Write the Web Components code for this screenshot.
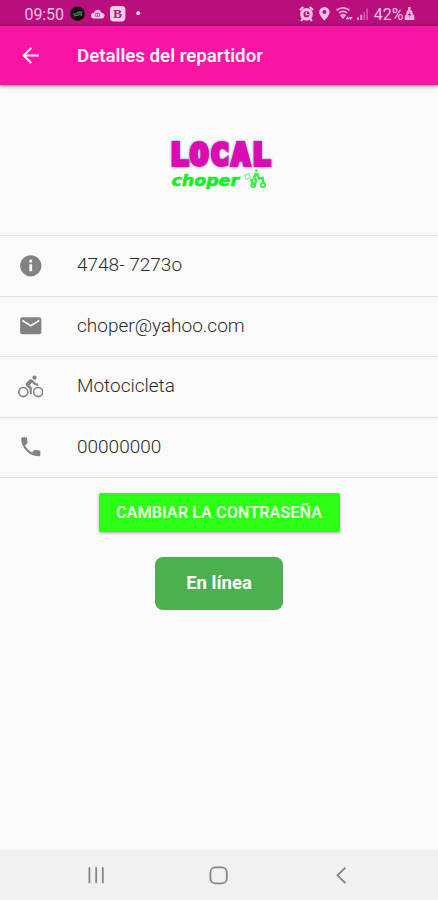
<!DOCTYPE html>
<html lang="es">
<head>
<meta charset="utf-8">
<meta name="viewport" content="width=device-width, initial-scale=1">
<title>Detalles del repartidor</title>
<style>
    body {
        margin: 0;
        background: #fafafa;
        font-family: Roboto, "Liberation Sans", sans-serif;
    }
</style>
</head>
<body>
<driver-screen></driver-screen>

<script>
// Paths for the list and toolbar icons, all on a 24 unit grid
const ICONS = {
    back: '<path d="M20 11H7.83l5.59-5.59L12 4l-8 8 8 8 1.41-1.41L7.83 13H20z"/>',
    info: '<path d="M12 2a10 10 0 1 0 0 20 10 10 0 0 0 0-20zm1.3 15.2h-2.6v-6.7h2.6zm0-8.3h-2.6V6.4h2.6z"/>',
    mail: '<path d="M20 4H4a2 2 0 0 0-2 2v12a2 2 0 0 0 2 2h16a2 2 0 0 0 2-2V6a2 2 0 0 0-2-2zm0 4-8 5-8-5V6l8 5 8-5z"/>',
    bike: '<path d="M15.5 5.5a2 2 0 1 0 0-4 2 2 0 0 0 0 4zM5 12a5 5 0 1 0 0 10 5 5 0 0 0 0-10zm0 8.5a3.5 3.5 0 1 1 0-7 3.5 3.5 0 0 1 0 7zm5.8-10 2.4-2.4.8.8c1.3 1.3 3 2.1 5.1 2.1V9c-1.5 0-2.7-.6-3.6-1.5l-1.9-1.9c-.5-.4-1-.6-1.6-.6s-1.1.2-1.4.6L7.8 8.4c-.4.4-.6.9-.6 1.4 0 .6.2 1.1.6 1.4L11 14v5h2v-6.2zM19 12a5 5 0 1 0 0 10 5 5 0 0 0 0-10zm0 8.5a3.5 3.5 0 1 1 0-7 3.5 3.5 0 0 1 0 7z"/>',
    phone: '<path d="M6.62 10.79c1.44 2.83 3.76 5.14 6.59 6.59l2.2-2.2c.27-.27.67-.36 1.02-.24 1.12.37 2.33.57 3.57.57.55 0 1 .45 1 1V20c0 .55-.45 1-1 1C10.61 21 3 13.39 3 4c0-.55.45-1 1-1h3.5c.55 0 1 .45 1 1 0 1.25.2 2.45.57 3.57.11.35.03.74-.25 1.02z"/>'
};

class AppIcon extends HTMLElement {
    constructor() {
        super();
        this.attachShadow({ mode: 'open' });
    }

    connectedCallback() {
        const size = this.getAttribute('size') || 25.5;
        this.shadowRoot.innerHTML = `
            <style>
                :host { display: block; line-height: 0; }
                svg { display: block; fill: currentColor; }
            </style>
            <svg width="${size}" height="${size}" viewBox="0 0 24 24">${ICONS[this.getAttribute('name')]}</svg>
        `;
    }
}

class StatusBar extends HTMLElement {
    constructor() {
        super();
        this.attachShadow({ mode: 'open' });
        this.shadowRoot.innerHTML = `
            <style>
                :host {
                    display: flex;
                    justify-content: space-between;
                    align-items: center;
                    box-sizing: border-box;
                    height: 26px;
                    padding: 2px 23.5px 0 24.5px;
                    background: #b90f7c;
                    color: #f8c3e5;
                    font-size: 16px;
                }
                .group { display: flex; align-items: center; }
                .time { width: 45.5px; letter-spacing: -0.1px; }
                svg { display: block; }
                .percent { margin-left: 1px; }
            </style>
            <div class="group">
                <span class="time">09:50</span>
                <!-- app badge, cloud, boxed B, more dot -->
                <svg width="74" height="18" viewBox="0 0 74 18">
                    <circle cx="7.5" cy="8.7" r="7.3" fill="#160b13"/>
                    <path d="M2.5 9h4l1.5-1.8h4.5M4 10.8l4-.5 1.2-1.5 2.4.2-.5 2" fill="none" stroke="#3b944c" stroke-width="1.2"/>
                    <path d="M23.4 13.4a2.8 2.8 0 0 1-.6-5.4c.8 0 1.2-.2 1.6-1.1a3.7 3.7 0 0 1 6.6 0c.4.9.8 1.1 1.6 1.1a2.8 2.8 0 0 1-.2 5.4z" fill="#fbcce9"/>
                    <path d="M25.2 11.3V8.4h4.4v2.9zM27.4 7.5v3.8" fill="none" stroke="#b5579a" stroke-width="1"/>
                    <rect x="40" y="1" width="15.4" height="15.4" rx="3.6" fill="#fbcce9"/>
                    <text x="47.6" y="13.2" text-anchor="middle" font-family="Liberation Serif, serif" font-weight="bold" font-size="13.5" fill="#a22b7d">B</text>
                    <circle cx="68.2" cy="8.2" r="2" fill="#fbcce9"/>
                </svg>
            </div>
            <div class="group">
                <!-- alarm, location, wifi, signal -->
                <svg width="74" height="18" viewBox="0 0 74 18" fill="#f8c3e5">
                    <path d="M1 5 4.3 2M10.7 2 14 5M3.5 14l-1.3 2M11.5 14l1.3 2" stroke="#f8c3e5" stroke-width="2.2"/>
                    <circle cx="7.5" cy="9.2" r="4.7" fill="none" stroke="#f8c3e5" stroke-width="3.2"/>
                    <path d="M7.2 6.5v3.1h2.6" fill="none" stroke="#f8c3e5" stroke-width="1.3"/>
                    <path fill-rule="evenodd" d="M25.4 1.9a5.2 5.2 0 0 0-5.2 5.2c0 3.5 5.2 8.7 5.2 8.7s5.2-5.2 5.2-8.7a5.2 5.2 0 0 0-5.2-5.2zm0 3.2a2 2 0 1 1 0 4 2 2 0 0 1 0-4z"/>
                    <path d="M37.5 5.3q6.5-4.8 13 0M39.8 7.9q4.2-3 8.4 0M42 10.4q2-1.5 4 0L44 12.7z" fill="none" stroke="#efafd8" stroke-width="1.7"/>
                    <path d="m46.6 14.2 1.9-2.8 1.9 2.8zM49.6 12l2 3.2 2-3.2z"/>
                    <path d="M58 15v-2.8h2V15zM61.2 15V9.8h2.1V15z" fill="#e48dc7"/>
                    <path d="M64.4 15V7h1.8v8zM67.2 15V3.8H69V15z" fill="#ce54a2"/>
                </svg>
                <span class="percent">42%</span>
                <svg width="11" height="16" viewBox="0 0 11 16">
                    <path d="M4 1h2.6v3.4h1.5l.8 4.2 1.4.8V14H.8V9.4l1.4-.8.6-4.2H4z" fill="#f3b5db"/>
                    <path d="M5.8 5.5 3.8 9.2h2l-.8 2.8 2.5-3.8h-2z" fill="#a32676"/>
                </svg>
            </div>
        `;
    }
}

class AppToolbar extends HTMLElement {
    constructor() {
        super();
        this.attachShadow({ mode: 'open' });
        this.shadowRoot.innerHTML = `
            <style>
                :host {
                    display: flex;
                    align-items: center;
                    height: 59px;
                    padding-left: 18px;
                    background: #f915a4;
                    color: #fff0fa;
                    box-shadow: 0 1px 4px rgba(0, 0, 0, 0.5);
                }
                .title {
                    margin-left: 34px;
                    font-size: 18.7px;
                    font-weight: 600;
                }
            </style>
            <app-icon name="back" size="25"></app-icon>
            <div class="title"><slot></slot></div>
        `;
    }
}

class BrandLogo extends HTMLElement {
    constructor() {
        super();
        this.attachShadow({ mode: 'open' });
        this.shadowRoot.innerHTML = `
            <style>
                :host { display: block; }
                svg { display: block; }
                .name { filter: drop-shadow(0 0 0.8px #4c8a7c); }
            </style>
            <svg width="110" height="64" viewBox="166 133 110 64">
                <text class="name" x="170.2 189.9 210.6 231.4 252.2" y="165"
                    font-family="DejaVu Sans Mono, monospace" font-weight="bold" font-size="30.5"
                    fill="#de0bb4" stroke="#de0bb4" stroke-width="3.8" stroke-linejoin="miter">LOCAL</text>
                <text x="171.5" y="186" textLength="67.5" lengthAdjust="spacingAndGlyphs"
                    font-family="DejaVu Sans, sans-serif" font-weight="bold" font-style="italic" font-size="15"
                    fill="#16ee24" stroke="#16ee24" stroke-width="0.6">choper</text>
                <!-- courier on a scooter -->
                <g fill="none" stroke="#3cee48">
                    <path d="M244.5 175l4.5-1.2 1.5 4-4.5 1.4zM249 181l5-1" stroke="#8df594" stroke-width="1.3"/>
                    <path d="M255.8 173l-1.6 4.5 2 3-2 6M257 173l2 5.5 3.5-.5 1.2 6M251.5 179l1.5 6" stroke-width="2.6"/>
                    <circle cx="253.3" cy="185.3" r="2" stroke-width="1.8"/>
                    <circle cx="263" cy="185" r="2.2" stroke-width="1.8"/>
                    <circle cx="256.3" cy="170.5" r="1" fill="#35ec42"/>
                </g>
            </svg>
        `;
    }
}

class DetailRow extends HTMLElement {
    constructor() {
        super();
        this.attachShadow({ mode: 'open' });
    }

    connectedCallback() {
        this.shadowRoot.innerHTML = `
            <style>
                :host {
                    display: flex;
                    align-items: center;
                    box-sizing: border-box;
                    height: 60.6px;
                    padding: 0 0 1px 17.5px;
                    border-top: 1.5px solid #e2e2e2;
                    color: #2c2c2c;
                    font-size: 19px;
                }
                app-icon { color: #828282; }
                .value {
                    margin-left: 34px;
                    padding-bottom: 1px;
                    font-weight: 360;
                }
            </style>
            <app-icon name="${this.getAttribute('icon')}"></app-icon>
            <div class="value"><slot></slot></div>
        `;
    }
}

class ActionButton extends HTMLElement {
    constructor() {
        super();
        this.attachShadow({ mode: 'open' });
        this.shadowRoot.innerHTML = `
            <style>
                :host { display: block; }
                button {
                    display: block;
                    width: 241px;
                    height: 39px;
                    padding: 0;
                    border: 0;
                    border-radius: 2px;
                    background: #2bff12;
                    color: #eaffe5;
                    font: 600 16.3px Roboto, sans-serif;
                    box-shadow: 0 1px 3px rgba(0, 0, 0, 0.35);
                }
                :host([kind="status"]) button {
                    width: 128px;
                    height: 53px;
                    border-radius: 8px;
                    background: #4caf50;
                    color: #fff;
                    font-weight: 700;
                    font-size: 18.5px;
                    box-shadow: none;
                }
            </style>
            <button type="button"><slot></slot></button>
        `;
    }
}

class SystemNav extends HTMLElement {
    constructor() {
        super();
        this.attachShadow({ mode: 'open' });
        this.shadowRoot.innerHTML = `
            <style>
                :host {
                    display: flex;
                    justify-content: space-between;
                    align-items: center;
                    box-sizing: border-box;
                    height: 50px;
                    padding: 0 86px;
                    background: #f1f1f1;
                }
                svg { display: block; fill: none; stroke: #858585; stroke-width: 1.8; }
            </style>
            <svg width="20" height="20"><path d="M3.4 2.3v16M10.2 2.3v16M16.8 2.3v16"/></svg>
            <svg width="20" height="20"><rect x="1.4" y="2.4" width="16.4" height="16" rx="5"/></svg>
            <svg width="20" height="20"><path d="M13.4 2.6 5.4 10.3l8 7.7"/></svg>
        `;
    }
}

class DriverScreen extends HTMLElement {
    constructor() {
        super();
        this.attachShadow({ mode: 'open' });
        this.shadowRoot.innerHTML = `
            <style>
                :host {
                    display: flex;
                    flex-direction: column;
                    height: 900px;
                    overflow: hidden;
                }
                main { flex: 1; }
                .logo {
                    display: flex;
                    justify-content: center;
                    padding: 48px 0 38px 4px;
                }
                .list { border-bottom: 1.5px solid #e2e2e2; }
                .actions {
                    display: flex;
                    flex-direction: column;
                    align-items: center;
                    gap: 25px;
                    padding-top: 14.5px;
                }
            </style>
            <status-bar></status-bar>
            <app-toolbar>Detalles del repartidor</app-toolbar>
            <main>
                <div class="logo"><brand-logo></brand-logo></div>
                <div class="list">
                    <detail-row icon="info">4748- 7273o</detail-row>
                    <detail-row icon="mail">choper@yahoo.com</detail-row>
                    <detail-row icon="bike">Motocicleta</detail-row>
                    <detail-row icon="phone">00000000</detail-row>
                </div>
                <div class="actions">
                    <action-button>CAMBIAR LA CONTRASEÑA</action-button>
                    <action-button kind="status">En línea</action-button>
                </div>
            </main>
            <system-nav></system-nav>
        `;
    }
}

customElements.define('app-icon', AppIcon);
customElements.define('status-bar', StatusBar);
customElements.define('app-toolbar', AppToolbar);
customElements.define('brand-logo', BrandLogo);
customElements.define('detail-row', DetailRow);
customElements.define('action-button', ActionButton);
customElements.define('system-nav', SystemNav);
customElements.define('driver-screen', DriverScreen);
</script>
</body>
</html>
